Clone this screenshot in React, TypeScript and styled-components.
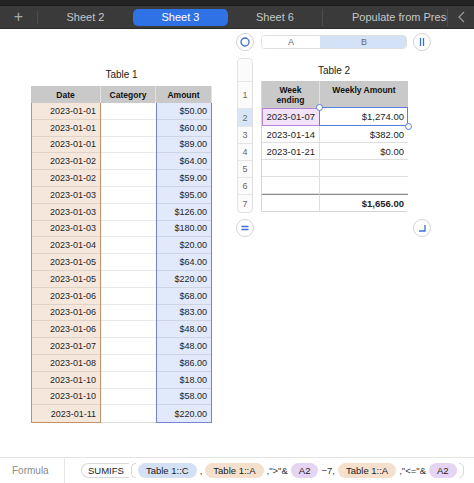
import React from 'react';
import styled, { createGlobalStyle } from 'styled-components';

const GlobalStyle = createGlobalStyle`
  html, body {
    margin: 0;
    padding: 0;
    background: #ffffff;
  }
  body {
    font-family: "Liberation Sans", Arial, sans-serif;
    width: 474px;
    height: 483px;
    overflow: hidden;
  }
  * { box-sizing: border-box; }
`;

const Page = styled.div`
  width: 474px;
  height: 483px;
  display: flex;
  flex-direction: column;
  overflow: hidden;
`;

const TopStrip = styled.div`
  height: 6px;
  background: #242424;
  border-bottom: 1px solid #1a1a1a;
`;

const TabBar = styled.div`
  height: 23px;
  background: #3a3a3a;
  display: flex;
  align-items: center;
  border-bottom: 1px solid #2a2a2a;
`;

const PlusButton = styled.div`
  width: 38px;
  height: 13px;
  display: flex;
  align-items: center;
  justify-content: center;
  color: #a8a8a8;
  font-size: 16px;
  font-weight: 300;
  border-right: 1px solid #4c4c4c;
`;

const Tab = styled.div<{ $active?: boolean; $divider?: boolean }>`
  width: 95px;
  height: 17px;
  display: flex;
  align-items: center;
  justify-content: center;
  font-size: 11px;
  color: ${p => (p.$active ? '#ffffff' : '#c6c6c6')};
  background: ${p => (p.$active ? '#2f72e6' : 'transparent')};
  border-radius: 5px;
  border-right: ${p => (p.$divider ? '1px solid #4c4c4c' : 'none')};
  ${p => p.$divider && 'border-radius: 0;'}
`;

const LastTab = styled.div`
  width: 125px;
  height: 17px;
  padding-left: 29px;
  display: flex;
  align-items: center;
  font-size: 11px;
  color: #c6c6c6;
  white-space: nowrap;
  overflow: hidden;
  border-right: 1px solid #4c4c4c;
`;

const Chevron = styled.div`
  flex: 1;
  display: flex;
  align-items: center;
  justify-content: center;
`;

const Canvas = styled.div`
  flex: 1;
  display: flex;
  align-items: flex-start;
  background: #ffffff;
`;

/* ---------- Table 1 ---------- */

const Table1Wrap = styled.div`
  margin-left: 31px;
  margin-top: 40px;
  width: 181px;
  display: flex;
  flex-direction: column;
  align-items: center;
`;

const TableTitle = styled.div`
  font-size: 10px;
  color: #222;
  height: 17px;
  line-height: 12px;
`;

const Grid1 = styled.div`
  display: grid;
  grid-template-columns: 70px 55px 56px;
  width: 181px;
`;

const HeadCell = styled.div`
  height: 17px;
  background: #c9c9c9;
  font-size: 8.5px;
  font-weight: bold;
  color: #111;
  display: flex;
  align-items: center;
  justify-content: center;
  border-right: 1px solid #e2e2e2;
  &:last-child { border-right: none; }
`;

const Column = styled.div<{ $tone: 'date' | 'plain' | 'amount' }>`
  display: flex;
  flex-direction: column;
  background: ${p =>
    p.$tone === 'date' ? '#f6e7dd' : p.$tone === 'amount' ? '#e2e9fa' : '#ffffff'};
  border: ${p =>
    p.$tone === 'date'
      ? '1.5px solid #c4906a'
      : p.$tone === 'amount'
      ? '1.5px solid #7385d2'
      : 'none'};
  border-top: none;
  ${p => p.$tone === 'plain' && 'border-bottom: 1px solid #dcdcdc;'}
`;

const BodyCell = styled.div`
  height: 16.8px;
  font-size: 9px;
  color: #1e1e1e;
  display: flex;
  align-items: center;
  justify-content: flex-end;
  padding-right: 4px;
  border-bottom: 1px solid rgba(0, 0, 0, 0.09);
  &:last-child { border-bottom: none; }
`;

/* ---------- Table 2 ---------- */

const Table2Area = styled.div`
  margin-left: 24px;
  margin-top: 4px;
  display: grid;
  grid-template-columns: 18px 7px 146px 6px 18px;
  grid-template-rows: 18px 7px auto 6px 18px;
`;

const Knob = styled.div<{ $col: number; $row: number }>`
  grid-column: ${p => p.$col};
  grid-row: ${p => p.$row};
  width: 18px;
  height: 18px;
  border-radius: 50%;
  border: 1px solid #d4d4d4;
  background: #fff;
  display: flex;
  align-items: center;
  justify-content: center;
`;

const ColHeaderBar = styled.div`
  grid-column: 3;
  grid-row: 1;
  align-self: center;
  height: 14px;
  display: grid;
  grid-template-columns: 58px 88px;
  border: 1px solid #dedede;
  border-radius: 4px;
  overflow: hidden;
`;

const ColLetter = styled.div<{ $selected?: boolean }>`
  display: flex;
  align-items: center;
  justify-content: center;
  font-size: 9px;
  color: #6a6a6a;
  background: ${p => (p.$selected ? '#d3e2f6' : '#fff')};
`;

const RowStrip = styled.div`
  grid-column: 1;
  grid-row: 3;
  width: 16px;
  margin-left: 1px;
  display: flex;
  flex-direction: column;
  border: 1px solid #e2e2e2;
  border-radius: 4px;
  overflow: hidden;
  background: #fbfbfb;
`;

const RowNum = styled.div<{ $h: number; $selected?: boolean }>`
  height: ${p => p.$h}px;
  display: flex;
  align-items: center;
  justify-content: center;
  font-size: 9px;
  color: #6a6a6a;
  background: ${p => (p.$selected ? '#d8e5f6' : 'transparent')};
  border-bottom: 1px solid #e6e6e6;
  &:last-child { border-bottom: none; }
`;

const Table2Wrap = styled.div`
  grid-column: 3;
  grid-row: 3;
  display: flex;
  flex-direction: column;
  align-items: center;
`;

const Title2 = styled.div`
  height: 23px;
  font-size: 10px;
  color: #222;
  display: flex;
  align-items: center;
  padding-top: 2px;
`;

const Grid2 = styled.div`
  position: relative;
  display: grid;
  grid-template-columns: 58px 88px;
  width: 146px;
  border: 1px solid #d6d6d6;
  border-top: none;
`;

const Head2 = styled.div`
  height: 27px;
  background: #c9c9c9;
  font-size: 8.5px;
  font-weight: bold;
  color: #111;
  text-align: center;
  line-height: 10px;
  padding-top: 4px;
  border-right: 1px solid #e2e2e2;
  &:nth-child(2) { border-right: none; }
`;

const Cell2 = styled.div<{ $h: number; $bold?: boolean; $hl?: boolean; $footer?: boolean; $last?: boolean }>`
  height: ${p => p.$h}px;
  font-size: 9.5px;
  font-weight: ${p => (p.$bold ? 'bold' : 'normal')};
  color: #1e1e1e;
  display: flex;
  align-items: center;
  justify-content: flex-end;
  padding-right: 4px;
  white-space: nowrap;
  background: ${p => (p.$hl ? '#f3e3f8' : '#fff')};
  border-bottom: 1px solid #dedede;
  border-right: ${p => (p.$last ? 'none' : '1px solid #dedede')};
  ${p => p.$hl && 'outline: 1px solid #b685dc; outline-offset: -1px;'}
  ${p => p.$footer && 'border-top: 1px solid #8e8e8e; border-bottom: none;'}
`;

const Selection = styled.div`
  position: absolute;
  left: 57px;
  top: 26px;
  width: 89px;
  height: 19px;
  border: 1.5px solid #5a7fe0;
  pointer-events: none;
`;

const Handle = styled.div<{ $pos: 'tl' | 'br' }>`
  position: absolute;
  width: 7px;
  height: 7px;
  border-radius: 50%;
  background: #fff;
  border: 1.2px solid #5a7fe0;
  ${p => (p.$pos === 'tl' ? 'left: -4.5px; top: -4.5px;' : 'right: -4.5px; bottom: -4.5px;')}
`;

/* ---------- Formula bar ---------- */

const FormulaBar = styled.div`
  height: 26px;
  border-top: 1px solid #e4e4e4;
  display: flex;
  align-items: center;
  background: #fff;
`;

const FormulaLabel = styled.div`
  width: 65px;
  height: 100%;
  display: flex;
  align-items: center;
  padding-left: 12px;
  font-size: 10px;
  color: #8a8a8a;
  border-right: 1px solid #e8e8e8;
`;

const Tokens = styled.div`
  display: flex;
  align-items: center;
  padding-left: 16px;
  gap: 2px;
  white-space: nowrap;
`;

const FnPill = styled.div`
  height: 15px;
  padding: 0 5px 0 6px;
  display: flex;
  align-items: center;
  font-size: 9.5px;
  color: #222;
  border: 1px solid #d8d8d8;
  border-right: none;
  border-radius: 8px 0 0 8px;
`;

const Paren = styled.div<{ $side: 'open' | 'close' }>`
  width: 5px;
  height: 15px;
  border: 1px solid #d8d8d8;
  ${p => (p.$side === 'open'
    ? 'border-right: none; border-radius: 6px 0 0 6px;'
    : 'border-left: none; border-radius: 0 6px 6px 0;')}
`;

const RefPill = styled.div<{ $tone: 'blue' | 'peach' | 'purple' }>`
  height: 15px;
  padding: 0 8px;
  display: flex;
  align-items: center;
  font-size: 9.5px;
  color: #222;
  border-radius: 8px;
  background: ${p =>
    p.$tone === 'blue' ? '#d4e0f4' : p.$tone === 'peach' ? '#f5e0cd' : '#e6d4f3'};
`;

const Op = styled.span`
  font-size: 9.5px;
  color: #333;
  padding: 0 1px;
`;

const table1 = [
  ['2023-01-01', '$50.00'],
  ['2023-01-01', '$60.00'],
  ['2023-01-01', '$89.00'],
  ['2023-01-02', '$64.00'],
  ['2023-01-02', '$59.00'],
  ['2023-01-03', '$95.00'],
  ['2023-01-03', '$126.00'],
  ['2023-01-03', '$180.00'],
  ['2023-01-04', '$20.00'],
  ['2023-01-05', '$64.00'],
  ['2023-01-05', '$220.00'],
  ['2023-01-06', '$68.00'],
  ['2023-01-06', '$83.00'],
  ['2023-01-06', '$48.00'],
  ['2023-01-07', '$48.00'],
  ['2023-01-08', '$86.00'],
  ['2023-01-10', '$18.00'],
  ['2023-01-10', '$58.00'],
  ['2023-01-11', '$220.00'],
];

const table2 = [
  { a: '2023-01-07', b: '$1,274.00', h: 18 },
  { a: '2023-01-14', b: '$382.00', h: 17 },
  { a: '2023-01-21', b: '$0.00', h: 17 },
  { a: '', b: '', h: 17 },
  { a: '', b: '', h: 17 },
];

const rowHeights = [23, 27, 18, 17, 17, 17, 17, 17];

const App: React.FC = () => {
  return (
    <Page>
      <GlobalStyle />
      <TopStrip />
      <TabBar>
        <PlusButton>+</PlusButton>
        <Tab>Sheet 2</Tab>
        <Tab $active>Sheet 3</Tab>
        <Tab $divider>Sheet 6</Tab>
        <LastTab>Populate from Preset</LastTab>
        <Chevron>
          <svg width="7" height="12" viewBox="0 0 7 12">
            <path d="M6 1L1 6l5 5" fill="none" stroke="#9a9a9a" strokeWidth="1.2" />
          </svg>
        </Chevron>
      </TabBar>

      <Canvas>
        <Table1Wrap>
          <TableTitle>Table 1</TableTitle>
          <Grid1>
            <HeadCell>Date</HeadCell>
            <HeadCell>Category</HeadCell>
            <HeadCell>Amount</HeadCell>
            <Column $tone="date">
              {table1.map((r, i) => (
                <BodyCell key={i}>{r[0]}</BodyCell>
              ))}
            </Column>
            <Column $tone="plain">
              {table1.map((_, i) => (
                <BodyCell key={i} />
              ))}
            </Column>
            <Column $tone="amount">
              {table1.map((r, i) => (
                <BodyCell key={i}>{r[1]}</BodyCell>
              ))}
            </Column>
          </Grid1>
        </Table1Wrap>

        <Table2Area>
          <Knob $col={1} $row={1}>
            <svg width="10" height="10" viewBox="0 0 10 10">
              <circle cx="5" cy="5" r="4" fill="none" stroke="#3d6fd6" strokeWidth="1.3" />
            </svg>
          </Knob>
          <ColHeaderBar>
            <ColLetter>A</ColLetter>
            <ColLetter $selected>B</ColLetter>
          </ColHeaderBar>
          <Knob $col={5} $row={1}>
            <svg width="8" height="10" viewBox="0 0 8 10">
              <path d="M2.5 1v8M5.5 1v8" stroke="#3d6fd6" strokeWidth="1.3" />
            </svg>
          </Knob>

          <RowStrip>
            {rowHeights.map((h, i) => (
              <RowNum key={i} $h={h} $selected={i === 2}>
                {i === 0 ? '' : i}
              </RowNum>
            ))}
          </RowStrip>

          <Table2Wrap>
            <Title2>Table 2</Title2>
            <Grid2>
              <Head2>
                Week
                <br />
                ending
              </Head2>
              <Head2>Weekly Amount</Head2>
              {table2.map((r, i) => (
                <React.Fragment key={i}>
                  <Cell2 $h={r.h} $hl={i === 0}>{r.a}</Cell2>
                  <Cell2 $h={r.h} $last>{r.b}</Cell2>
                </React.Fragment>
              ))}
              <Cell2 $h={17} $footer />
              <Cell2 $h={17} $footer $bold $last>$1,656.00</Cell2>
              <Selection>
                <Handle $pos="tl" />
                <Handle $pos="br" />
              </Selection>
            </Grid2>
          </Table2Wrap>

          <Knob $col={1} $row={5}>
            <svg width="10" height="10" viewBox="0 0 10 10">
              <path d="M1.5 3.5h7M1.5 6.5h7" stroke="#3d6fd6" strokeWidth="1.3" />
            </svg>
          </Knob>
          <Knob $col={5} $row={5}>
            <svg width="10" height="10" viewBox="0 0 10 10">
              <path d="M8 2v6H2" fill="none" stroke="#3d6fd6" strokeWidth="1.3" />
            </svg>
          </Knob>
        </Table2Area>
      </Canvas>

      <FormulaBar>
        <FormulaLabel>Formula</FormulaLabel>
        <Tokens>
          <FnPill>SUMIFS</FnPill>
          <Paren $side="open" />
          <RefPill $tone="blue">Table 1::C</RefPill>
          <Op>,</Op>
          <RefPill $tone="peach">Table 1::A</RefPill>
          <Op>,"&gt;"&amp;</Op>
          <RefPill $tone="purple">A2</RefPill>
          <Op>−7,</Op>
          <RefPill $tone="peach">Table 1::A</RefPill>
          <Op>,"&lt;="&amp;</Op>
          <RefPill $tone="purple">A2</RefPill>
          <Paren $side="close" />
        </Tokens>
      </FormulaBar>
    </Page>
  );
};

export default App;
